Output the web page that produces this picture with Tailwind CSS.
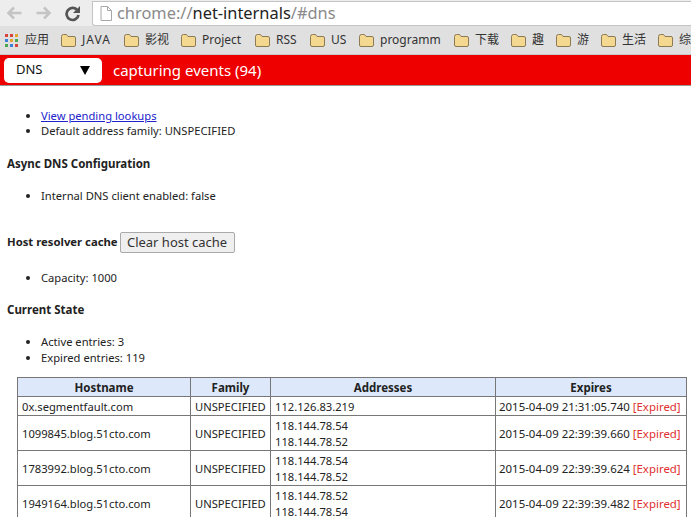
<!DOCTYPE html>
<html><head><meta charset="utf-8"><script src="https://cdn.jsdelivr.net/npm/@tailwindcss/browser@4"></script></head>
<body class="w-[691px] h-[517px] overflow-hidden bg-white font-['Noto_Sans','Noto_Sans_CJK_SC',sans-serif] text-[11.2px] text-[#222]">
<div class="h-[26px] bg-[#ededed] flex items-center relative">
  <svg class="ml-[6px] w-[17px] h-[16px]" viewBox="0 0 17 16"><path d="M15.5 8H3M8 2.5 2.5 8 8 13.5" fill="none" stroke="#c4c4c4" stroke-width="2.6"/></svg>
  <svg class="ml-[12px] w-[17px] h-[16px]" viewBox="0 0 17 16"><path d="M1.5 8H14M9 2.5 14.5 8 9 13.500" fill="none" stroke="#c4c4c4" stroke-width="2.6"/></svg>
  <svg class="ml-[12px] w-[17px] h-[17px]" viewBox="0 0 17 17"><path d="M13.5 5.5A6 6 0 1 0 14.5 10" fill="none" stroke="#555" stroke-width="2.7"/><path d="M16 1v7H9z" fill="#555"/></svg>
  <div class="ml-[11px] flex-1 h-[25px] bg-white border border-[#c4c4c4] rounded-bl-[3px] border-r-0 flex items-center">
    <svg class="ml-[7px] w-[12px] h-[15px]" viewBox="0 0 12 15"><path d="M1 .5h6.500l4 4v10H1zM7.500.5v4h4" fill="none" stroke="#a8a8a8"/></svg>
    <span class="ml-[5px] mt-[1px] text-[16.4px] leading-none text-[#8a8a8a] whitespace-nowrap">chrome://<span class="text-[#222]">net-internals</span>/#dns</span>
  </div>
</div>
<div class="h-[29px] bg-[#e0e0e0] border-b border-[#c8c8c8] flex items-center text-[12px] text-[#333] whitespace-nowrap overflow-hidden">
  <svg class="ml-[5px] w-[13px] h-[13px]" viewBox="0 0 13 13"><g fill="#d9443a"><rect width="3" height="3"/><rect x="5" width="3" height="3"/></g><rect x="10" width="3" height="3" fill="#e3a52f"/><rect y="5" width="3" height="3" fill="#3f7fdc"/><rect x="5" y="5" width="3" height="3" fill="#e3a52f"/><rect x="10" y="5" width="3" height="3" fill="#4aa651"/><rect y="10" width="3" height="3" fill="#4aa651"/><rect x="5" y="10" width="3" height="3" fill="#3f7fdc"/><rect x="10" y="10" width="3" height="3" fill="#d9443a"/></svg>
  <span class="absolute left-[25px]">应用</span>
  <span class="absolute left-[61px] flex items-center gap-[6px]"><svg class="w-[15px] h-[13px]" viewBox="0 0 15 13"><path d="M.5 2.500q0-2 2-2h3l1.500 2h6q1.500 0 1.500 1.500v7q0 1.500-1.500 1.500h-11q-1.500 0-1.500-1.500z" fill="#f5d890" stroke="#8c7a55"/></svg><span class="tracking-[1px]">JAVA</span></span>
  <span class="absolute left-[124px] flex items-center gap-[6px]"><svg class="w-[15px] h-[13px]" viewBox="0 0 15 13"><path d="M.5 2.500q0-2 2-2h3l1.500 2h6q1.500 0 1.500 1.500v7q0 1.500-1.500 1.500h-11q-1.500 0-1.500-1.500z" fill="#f5d890" stroke="#8c7a55"/></svg>影视</span>
  <span class="absolute left-[181px] flex items-center gap-[6px]"><svg class="w-[15px] h-[13px]" viewBox="0 0 15 13"><path d="M.5 2.500q0-2 2-2h3l1.500 2h6q1.500 0 1.500 1.500v7q0 1.500-1.500 1.500h-11q-1.500 0-1.500-1.500z" fill="#f5d890" stroke="#8c7a55"/></svg>Project</span>
  <span class="absolute left-[255px] flex items-center gap-[6px]"><svg class="w-[15px] h-[13px]" viewBox="0 0 15 13"><path d="M.5 2.500q0-2 2-2h3l1.500 2h6q1.500 0 1.500 1.500v7q0 1.500-1.500 1.500h-11q-1.500 0-1.500-1.500z" fill="#f5d890" stroke="#8c7a55"/></svg>RSS</span>
  <span class="absolute left-[310px] flex items-center gap-[6px]"><svg class="w-[15px] h-[13px]" viewBox="0 0 15 13"><path d="M.5 2.500q0-2 2-2h3l1.500 2h6q1.500 0 1.500 1.500v7q0 1.500-1.500 1.500h-11q-1.500 0-1.500-1.500z" fill="#f5d890" stroke="#8c7a55"/></svg>US</span>
  <span class="absolute left-[359px] flex items-center gap-[6px]"><svg class="w-[15px] h-[13px]" viewBox="0 0 15 13"><path d="M.5 2.500q0-2 2-2h3l1.500 2h6q1.500 0 1.500 1.500v7q0 1.500-1.500 1.500h-11q-1.500 0-1.500-1.500z" fill="#f5d890" stroke="#8c7a55"/></svg>programm</span>
  <span class="absolute left-[454px] flex items-center gap-[6px]"><svg class="w-[15px] h-[13px]" viewBox="0 0 15 13"><path d="M.5 2.500q0-2 2-2h3l1.500 2h6q1.500 0 1.500 1.500v7q0 1.500-1.500 1.500h-11q-1.500 0-1.500-1.500z" fill="#f5d890" stroke="#8c7a55"/></svg>下载</span>
  <span class="absolute left-[511px] flex items-center gap-[6px]"><svg class="w-[15px] h-[13px]" viewBox="0 0 15 13"><path d="M.5 2.500q0-2 2-2h3l1.500 2h6q1.500 0 1.500 1.500v7q0 1.500-1.500 1.500h-11q-1.500 0-1.500-1.500z" fill="#f5d890" stroke="#8c7a55"/></svg>趣</span>
  <span class="absolute left-[556px] flex items-center gap-[6px]"><svg class="w-[15px] h-[13px]" viewBox="0 0 15 13"><path d="M.5 2.500q0-2 2-2h3l1.500 2h6q1.500 0 1.500 1.500v7q0 1.500-1.500 1.500h-11q-1.500 0-1.500-1.500z" fill="#f5d890" stroke="#8c7a55"/></svg>游</span>
  <span class="absolute left-[601px] flex items-center gap-[6px]"><svg class="w-[15px] h-[13px]" viewBox="0 0 15 13"><path d="M.5 2.500q0-2 2-2h3l1.500 2h6q1.500 0 1.500 1.500v7q0 1.500-1.500 1.500h-11q-1.500 0-1.500-1.500z" fill="#f5d890" stroke="#8c7a55"/></svg>生活</span>
  <span class="absolute left-[658px] flex items-center gap-[6px]"><svg class="w-[15px] h-[13px]" viewBox="0 0 15 13"><path d="M.5 2.500q0-2 2-2h3l1.500 2h6q1.500 0 1.500 1.500v7q0 1.500-1.500 1.500h-11q-1.500 0-1.500-1.500z" fill="#f5d890" stroke="#8c7a55"/></svg>综</span>
</div>
<div class="h-[31px] bg-[#ee0000] border-b border-[#999] flex items-center pl-[4px]">
  <div class="w-[98px] h-[25px] bg-white rounded-[5px] flex items-center pl-[12px] pr-[12px] justify-between text-[13px] text-[#111]"><span>DNS</span><span class="w-0 h-0 border-x-[5px] border-x-transparent border-t-[9px] border-t-black"></span></div>
  <span class="ml-[11px] text-[15px] text-white">capturing events (94)</span>
</div>
<div class="pl-[7px]">
  <ul class="list-disc pl-[34px] mt-[22px] leading-[15px]">
    <li><a class="text-[#2222cc] underline">View pending lookups</a></li>
    <li>Default address family: UNSPECIFIED</li>
  </ul>
  <h4 class="font-bold text-[11.5px] mt-[18px] leading-[16px]">Async DNS Configuration</h4>
  <ul class="list-disc pl-[34px] mt-[16px] leading-[16px]"><li>Internal DNS client enabled: false</li></ul>
  <div class="mt-[27px] flex items-center h-[22px]"><b class="text-[11.3px]">Host resolver cache</b><button class="ml-[2px] h-[21px] w-[115px] bg-[#efefef] border border-[#aaa] rounded-[2px] text-[13px] text-[#333]">Clear host cache</button></div>
  <ul class="list-disc pl-[34px] mt-[17px] leading-[16px]"><li>Capacity: 1000</li></ul>
  <h4 class="font-bold text-[11.5px] mt-[16px] leading-[16px]">Current State</h4>
  <ul class="list-disc pl-[34px] mt-[16px] leading-[16px]"><li>Active entries: 3</li><li>Expired entries: 119</li></ul>
  <table class="ml-[10px] mt-[11px] border-collapse table-fixed w-[669px] border border-[#777]">
    <colgroup><col class="w-[173px]"><col class="w-[80px]"><col class="w-[225px]"><col class="w-[191px]"></colgroup>
    <thead class="bg-[#dde9fb] text-[11.5px]"><tr class="h-[19px]"><th class="border border-[#777] font-bold text-center p-0 pt-[1px] leading-[16px]">Hostname</th><th class="border border-[#777] font-bold text-center p-0 pt-[1px] leading-[16px]">Family</th><th class="border border-[#777] font-bold text-center p-0 pt-[1px] leading-[16px]">Addresses</th><th class="border border-[#777] font-bold text-center p-0 pt-[1px] leading-[16px]">Expires</th></tr></thead>
    <tbody class="leading-[16px]">
      <tr class="h-[19px]"><td class="border border-[#777] px-[4px] pt-[1px] pb-0">0x.segmentfault.com</td><td class="border border-[#777] px-[4px] pt-[1px] pb-0">UNSPECIFIED</td><td class="border border-[#777] px-[4px] pt-[1px] pb-0">112.126.83.219</td><td class="border border-[#777] pl-[3px] pr-0 pt-[1px] pb-0 whitespace-nowrap text-[11.45px]">2015-04-09 21:31:05.740 <span class="text-[#e03030]">[Expired]</span></td></tr>
      <tr class="h-[35px]"><td class="border border-[#777] px-[4px] pt-[1px] pb-0">1099845.blog.51cto.com</td><td class="border border-[#777] px-[4px] pt-[1px] pb-0">UNSPECIFIED</td><td class="border border-[#777] px-[4px] pt-[1px] pb-0">118.144.78.54<br>118.144.78.52</td><td class="border border-[#777] pl-[3px] pr-0 pt-[1px] pb-0 whitespace-nowrap text-[11.45px]">2015-04-09 22:39:39.660 <span class="text-[#e03030]">[Expired]</span></td></tr>
      <tr class="h-[35px]"><td class="border border-[#777] px-[4px] pt-[1px] pb-0">1783992.blog.51cto.com</td><td class="border border-[#777] px-[4px] pt-[1px] pb-0">UNSPECIFIED</td><td class="border border-[#777] px-[4px] pt-[1px] pb-0">118.144.78.54<br>118.144.78.52</td><td class="border border-[#777] pl-[3px] pr-0 pt-[1px] pb-0 whitespace-nowrap text-[11.45px]">2015-04-09 22:39:39.624 <span class="text-[#e03030]">[Expired]</span></td></tr>
      <tr class="h-[35px]"><td class="border border-[#777] px-[4px] pt-[1px] pb-0">1949164.blog.51cto.com</td><td class="border border-[#777] px-[4px] pt-[1px] pb-0">UNSPECIFIED</td><td class="border border-[#777] px-[4px] pt-[1px] pb-0">118.144.78.52<br>118.144.78.54</td><td class="border border-[#777] pl-[3px] pr-0 pt-[1px] pb-0 whitespace-nowrap text-[11.45px]">2015-04-09 22:39:39.482 <span class="text-[#e03030]">[Expired]</span></td></tr>
    </tbody>
  </table>
</div>
</body></html>
